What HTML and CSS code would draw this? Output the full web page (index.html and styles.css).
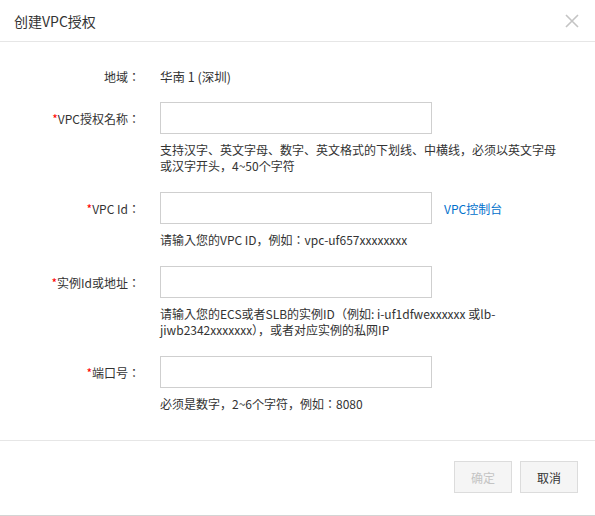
FILE: index.html
```html
<!DOCTYPE html>
<html lang="zh-CN">
<head>
<meta charset="utf-8">
<title>创建VPC授权</title>
<link rel="stylesheet" href="styles.css">
</head>
<body>
<div class="dialog">
  <div class="header">
    <div class="title">创建VPC授权</div>
    <svg class="close" width="14" height="14" viewBox="0 0 14 14"><path d="M1 1L13 13M13 1L1 13" stroke="#c4c4c4" stroke-width="1.6" fill="none"/></svg>
  </div>
  <div class="body">
    <div class="row info">
      <div class="label">地域：</div>
      <div class="value">华南 1 (深圳)</div>
    </div>
    <div class="field">
      <div class="row">
        <div class="label"><span class="req">*</span>VPC授权名称：</div>
        <div class="input"></div>
      </div>
      <div class="help">支持汉字、英文字母、数字、英文格式的下划线、中横线，必须以英文字母<br>或汉字开头，4~50个字符</div>
    </div>
    <div class="field">
      <div class="row">
        <div class="label"><span class="req">*</span>VPC Id：</div>
        <div class="input"></div>
        <a class="link">VPC控制台</a>
      </div>
      <div class="help">请输入您的VPC ID，例如：vpc-uf657xxxxxxxx</div>
    </div>
    <div class="field">
      <div class="row">
        <div class="label"><span class="req">*</span>实例Id或地址：</div>
        <div class="input"></div>
      </div>
      <div class="help">请输入您的ECS或者SLB的实例ID（例如: i-uf1dfwexxxxxx 或lb-<br>jiwb2342xxxxxxx），或者对应实例的私网IP</div>
    </div>
    <div class="field">
      <div class="row">
        <div class="label"><span class="req">*</span>端口号：</div>
        <div class="input"></div>
      </div>
      <div class="help">必须是数字，2~6个字符，例如：8080</div>
    </div>
  </div>
  <div class="footer">
    <div class="btn disabled">确定</div>
    <div class="btn">取消</div>
  </div>
</div>
</body>
</html>
```

FILE: styles.css
```css
html, body {
  margin: 0;
  padding: 0;
  background: #fff;
}
body {
  font-family: "Noto Sans CJK SC", "Liberation Sans", sans-serif;
  font-size: 12px;
  color: #333;
}
.dialog {
  width: 595px;
  height: 516px;
  box-sizing: border-box;
  border-bottom: 1px solid #d4d4d4;
  display: flex;
  flex-direction: column;
}
.header {
  height: 41px;
  border-bottom: 1px solid #e6e6e6;
  display: flex;
  align-items: center;
  justify-content: space-between;
  padding: 0 16px 0 14px;
  flex: none;
}
.title {
  font-size: 14px;
  line-height: 20px;
  color: #333;
}
.close {
  display: block;
  margin-top: 1px;
}
.body {
  height: 398px;
  box-sizing: border-box;
  padding-top: 27px;
  flex: none;
}
.row {
  display: flex;
  align-items: center;
  height: 32px;
}
.row.info {
  height: 16px;
  line-height: 16px;
  margin-bottom: 17px;
}
.label,
.help {
  font-family: "Noto Sans CJK JP", "Noto Sans CJK SC", "Liberation Sans", sans-serif;
  font-feature-settings: "locl" 0;
}
.label {
  width: 140px;
  margin-right: 20px;
  text-align: right;
  flex: none;
  white-space: nowrap;
}
.req {
  color: #f00;
}
.value {
  font-size: 12.5px;
}
.input {
  width: 272px;
  height: 32px;
  box-sizing: border-box;
  border: 1px solid #cfcfcf;
  background: #fff;
  flex: none;
}
.link {
  margin-left: 12px;
  color: #0070cc;
  cursor: pointer;
}
.field {
  margin-bottom: 18px;
}
.help {
  margin-top: 8px;
  padding-left: 160px;
  line-height: 16px;
  white-space: nowrap;
}
.footer {
  flex: 1;
  border-top: 1px solid #e6e6e6;
  display: flex;
  justify-content: flex-end;
  align-items: flex-start;
  gap: 8px;
  padding: 20px 17px 0 0;
}
.btn {
  width: 58px;
  height: 32px;
  box-sizing: border-box;
  border: 1px solid #dcdcdc;
  background: #f5f5f5;
  display: flex;
  align-items: center;
  justify-content: center;
  font-size: 12px;
  color: #333;
}
.btn.disabled {
  color: #c4c4c4;
}
```
